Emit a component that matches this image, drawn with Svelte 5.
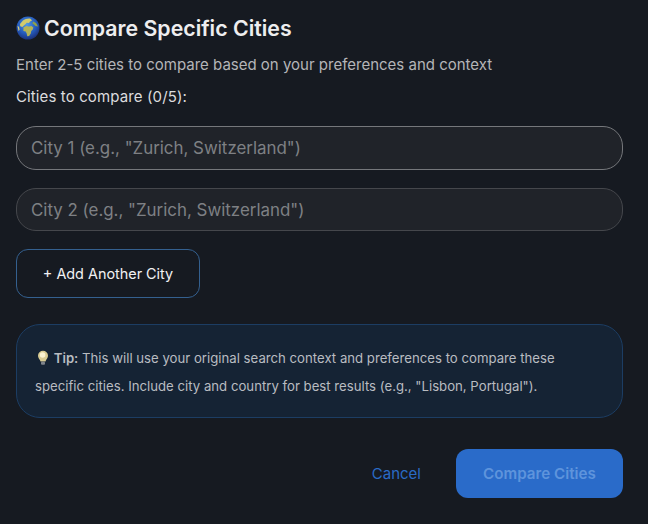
<script>
  const cities = ['', ''];
</script>

<div class="modal">
  <h2 class="title">
    <svg class="globe" viewBox="0 0 24 24" aria-hidden="true">
      <defs>
        <radialGradient id="sea" cx="45%" cy="35%" r="70%">
          <stop offset="0%" stop-color="#4f9ae8" />
          <stop offset="60%" stop-color="#2458b8" />
          <stop offset="100%" stop-color="#1b2a6e" />
        </radialGradient>
      </defs>
      <circle cx="12" cy="12" r="11.5" fill="url(#sea)" />
      <path d="M7 4.500c2-1.500 5-2.300 7.500-1.800l1.500 1.800-2 .9-1 1.600-2.300-.3-1 1.300-1.500 1.300-1.800 1.700-2.200-.8-.2-2.200z" fill="#d2cb6c" />
      <path d="M7.500 11.200l3-1.200 2.300.6 2.700-.5 1.800 1.300-.5 2-1.600 1.500-.4 2.500-1.700 2.600-1.800.2-.7-3-.9-1.600-2.300-.6z" fill="#b3b358" />
      <path d="M17 5.500l3 1.500 2 3.500-2.500-.5-1.500-1.500-1.500-1z" fill="#8fa24a" />
      <path d="M1.500 10l1.500.8.600 3-1 1.200z" fill="#d8cd78" />
    </svg>
    Compare Specific Cities
  </h2>
  <p class="intro">Enter 2-5 cities to compare based on your preferences and context</p>
  <div class="label">Cities to compare (0/5):</div>

  <div class="inputs">
    {#each cities as city, i}
      <input class="city" class:first={i === 0} type="text" value={city} placeholder={`City ${i + 1} (e.g., "Zurich, Switzerland")`} />
    {/each}
  </div>

  <button class="add">+ Add Another City</button>

  <div class="tip">
    <p>
      <svg class="bulb" viewBox="0 0 12 16" aria-hidden="true">
        <path d="M6 .8a5 5 0 0 0-5 5c0 2 1.300 3 2 4.400l.5 1.300h5l.5-1.300c.7-1.400 2-2.400 2-4.400a5 5 0 0 0-5-5z" fill="#d9cc94" />
        <circle cx="5.600" cy="5" r="2.800" fill="#fbf3d2" />
        <rect x="4" y="11.800" width="4" height="3" rx="1" fill="#7f848b" />
      </svg>
      <strong>Tip:</strong> This will use your original search context and preferences to compare these specific cities. Include city and country for best results (e.g., "Lisbon, Portugal").
    </p>
  </div>

  <div class="actions">
    <button class="cancel">Cancel</button>
    <button class="submit">Compare Cities</button>
  </div>
</div>

<style>
  :global(body) {
    background: #161a21;
  }

  .modal {
    box-sizing: border-box;
    width: 648px;
    height: 524px;
    padding: 12px 25px 0 16px;
    background: #161a21;
    font-family: Inter, sans-serif;
    color: #e8e8ea;
  }

  .title {
    display: flex;
    align-items: center;
    gap: 4px;
    margin: 0;
    height: 32px;
    font-size: 21.3px;
    font-weight: 600;
    color: #eeeeef;
  }

  .globe {
    width: 24px;
    height: 24px;
    flex: none;
  }

  .intro {
    margin: 9px 0 0;
    font-size: 15px;
    line-height: 24px;
    color: #b4b5b8;
  }

  .label {
    margin-top: 8px;
    font-size: 15px;
    line-height: 24px;
    letter-spacing: 0.12px;
    color: #dcdcde;
  }

  .inputs {
    display: flex;
    flex-direction: column;
    gap: 18px;
    margin-top: 17px;
  }

  .city {
    box-sizing: border-box;
    width: 100%;
    height: 43px;
    padding: 0 14px;
    border: 1px solid #45474c;
    border-radius: 20px;
    background: #202329;
    font-family: inherit;
    font-size: 16.9px;
    color: #e8e8ea;
    outline: none;
  }

  .city.first {
    height: 44px;
    border-color: #75777b;
  }

  .city::placeholder {
    color: #7e8084;
    opacity: 1;
  }

  .add {
    display: block;
    box-sizing: border-box;
    width: 184px;
    height: 49px;
    margin-top: 18px;
    border: 1px solid #34608f;
    border-radius: 12px;
    background: transparent;
    font-family: inherit;
    font-size: 14.4px;
    font-weight: 400;
    color: #f1f1f3;
  }

  .tip {
    box-sizing: border-box;
    height: 94px;
    margin-top: 26px;
    padding: 19px 32px 0 18px;
    border: 1px solid #1c3d63;
    border-radius: 24px;
    background: #152334;
  }

  .tip p {
    margin: 0;
    font-size: 13.2px;
    line-height: 28px;
    color: #b9bcc1;
  }

  .tip strong {
    font-weight: 600;
  }

  .bulb {
    display: inline-block;
    width: 12px;
    height: 16px;
    margin: 0 1px 0 2px;
    vertical-align: -3px;
  }

  .actions {
    display: flex;
    justify-content: flex-end;
    align-items: center;
    gap: 35px;
    margin-top: 31px;
  }

  .cancel {
    padding: 0;
    border: 0;
    background: none;
    font-family: inherit;
    font-size: 15px;
    font-weight: 400;
    color: #2a6bc6;
  }

  .submit {
    width: 167px;
    height: 49px;
    border: 0;
    border-radius: 12px;
    background: #2a6bc9;
    font-family: inherit;
    font-size: 15.2px;
    font-weight: 600;
    color: #5e94dc;
  }
</style>
